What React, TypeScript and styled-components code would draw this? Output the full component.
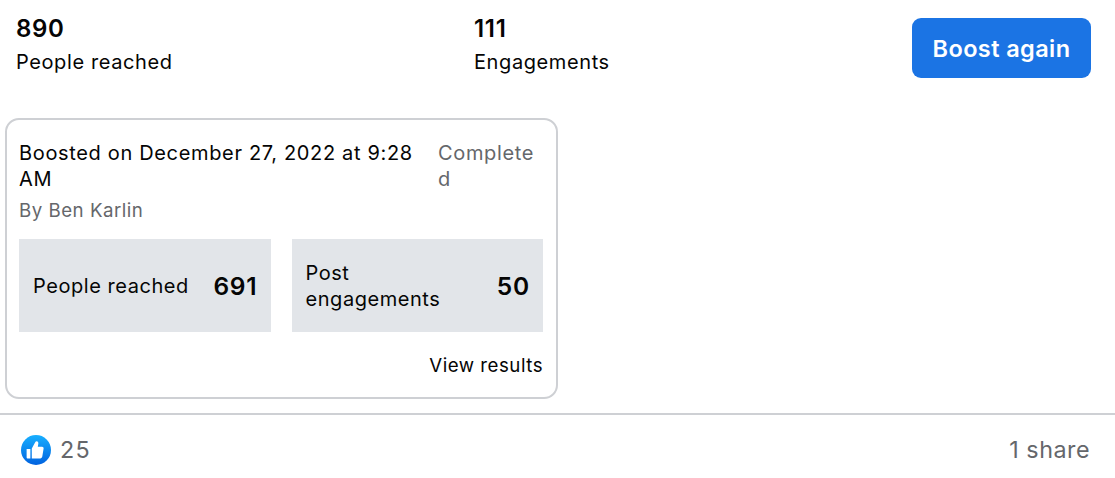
import React from "react";
import styled, { createGlobalStyle } from "styled-components";

const Global = createGlobalStyle`
  html, body { margin: 0; padding: 0; background: #fff; }
  body { font-family: Inter, "Liberation Sans", sans-serif; color: #050505; letter-spacing: 0.5px; }
`;

const Page = styled.div`
  width: 1115px;
  height: 478px;
  overflow: hidden;
  display: flex;
  flex-direction: column;
`;

const Summary = styled.div`
  box-sizing: border-box;
  height: 78px;
  display: grid;
  grid-template-columns: 458px 1fr auto;
  padding: 16px 24px 0 16px;
  align-items: start;
`;

const Metric = styled.div`
  display: flex;
  flex-direction: column;
  gap: 8px;
`;

const MetricValue = styled.div`
  font-size: 24px;
  font-weight: 600;
  line-height: 26px;
  letter-spacing: 0.7px;
`;

const MetricLabel = styled.div`
  font-size: 20px;
  line-height: 24px;
  letter-spacing: 0.6px;
`;

const Boost = styled.button`
  width: 179px;
  height: 60px;
  margin-top: 2px;
  border: 0;
  border-radius: 9px;
  background: #1b74e4;
  color: #fff;
  letter-spacing: 0.4px;
  font: 600 23.5px Inter, "Liberation Sans", sans-serif;
`;

const Card = styled.div`
  box-sizing: border-box;
  width: 553px;
  height: 281px;
  margin: 40px 0 14px 5px;
  padding: 20px 13px 0 12px;
  border: 2px solid #ced0d4;
  border-radius: 14px;
`;

const CardHeader = styled.div`
  display: flex;
  justify-content: space-between;
`;

const Title = styled.div`
  width: 405px;
  font-size: 20px;
  line-height: 26px;
  letter-spacing: 0.66px;
`;

const Status = styled.div`
  width: 105px;
  font-size: 20px;
  line-height: 26px;
  letter-spacing: 0.65px;
  color: #65676b;
  word-break: break-all;
`;

const Byline = styled.div`
  margin-top: 8px;
  font-size: 18.7px;
  line-height: 22px;
  color: #65676b;
`;

const Stats = styled.div`
  display: grid;
  grid-template-columns: 1fr 1fr;
  gap: 21px;
  margin-top: 17px;
`;

const Stat = styled.div`
  box-sizing: border-box;
  height: 93px;
  padding: 0 13px 0 14px;
  display: flex;
  align-items: center;
  justify-content: space-between;
  background: #e2e5e9;
`;

const StatLabel = styled.div`
  font-size: 20px;
  line-height: 26px;
  letter-spacing: 0.55px;
  max-width: 165px;
`;

const StatValue = styled.div`
  font-size: 24.5px;
  font-weight: 600;
  letter-spacing: 0.8px;
`;

const ViewLink = styled.div`
  margin-top: 22px;
  text-align: right;
  font-size: 18.7px;
  line-height: 24px;
`;

const Footer = styled.div`
  flex: 1;
  border-top: 2px solid #ced0d4;
  display: flex;
  align-items: center;
  justify-content: space-between;
  padding: 6px 25px 0 21px;
  color: #65676b;
  font-size: 23.3px;
`;

const Likes = styled.div`
  display: flex;
  align-items: center;
  gap: 9px;
  letter-spacing: 1.2px;
`;

const LikeIcon = () => (
  <svg width="30" height="30" viewBox="0 0 32 32">
    <defs>
      <linearGradient id="likeFill" x1="0" y1="0" x2="0" y2="1">
        <stop offset="0" stopColor="#18afff" />
        <stop offset="1" stopColor="#0062df" />
      </linearGradient>
    </defs>
    <circle cx="16" cy="16" r="16" fill="url(#likeFill)" />
    <path
      fill="#fff"
      d="M6 15h4v10H7a1 1 0 0 1-1-1zM11.500 14.500l3.500-6.500c.4-.8 1-1.300 1.700-1.300 1.200 0 1.800 1 1.800 2.200 0 1.100-.3 2.200-.6 3.600h4.600c1.100 0 1.800 1 1.600 2l-1.400 8.500c-.2 1.100-1 2-2.200 2h-9z"
    />
  </svg>
);

export default function App() {
  return (
    <Page>
      <Global />
      <Summary>
        <Metric>
          <MetricValue>890</MetricValue>
          <MetricLabel>People reached</MetricLabel>
        </Metric>
        <Metric>
          <MetricValue>111</MetricValue>
          <MetricLabel>Engagements</MetricLabel>
        </Metric>
        <Boost>Boost again</Boost>
      </Summary>
      <Card>
        <CardHeader>
          <Title>Boosted on December 27, 2022 at 9:28 AM</Title>
          <Status>Completed</Status>
        </CardHeader>
        <Byline>By Ben Karlin</Byline>
        <Stats>
          <Stat>
            <StatLabel>People reached</StatLabel>
            <StatValue>691</StatValue>
          </Stat>
          <Stat>
            <StatLabel>Post engagements</StatLabel>
            <StatValue>50</StatValue>
          </Stat>
        </Stats>
        <ViewLink>View results</ViewLink>
      </Card>
      <Footer>
        <Likes>
          <LikeIcon />
          25
        </Likes>
        <span>1 share</span>
      </Footer>
    </Page>
  );
}
